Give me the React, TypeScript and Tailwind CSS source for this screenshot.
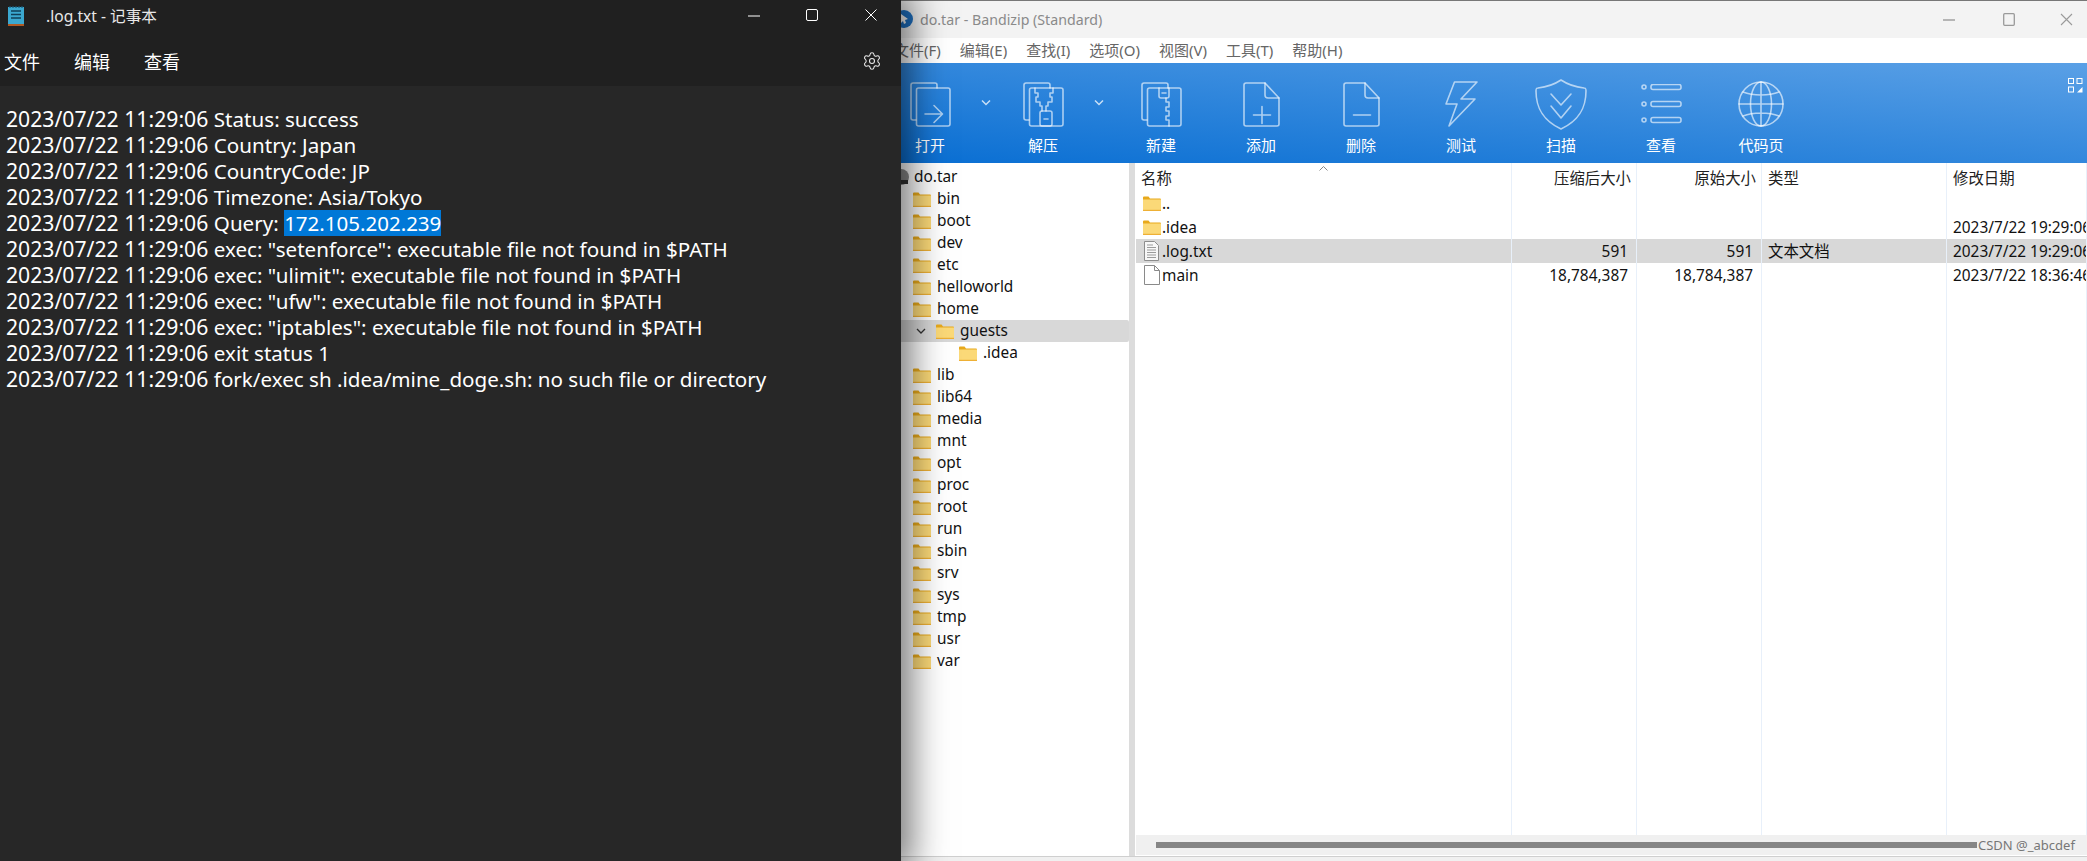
import { Settings } from "lucide-react";

const logLines = [
  "Status: success",
  "Country: Japan",
  "CountryCode: JP",
  "Timezone: Asia/Tokyo",
  "Query: ",
  'exec: "setenforce": executable file not found in $PATH',
  'exec: "ulimit": executable file not found in $PATH',
  'exec: "ufw": executable file not found in $PATH',
  'exec: "iptables": executable file not found in $PATH',
  "exit status 1",
  "fork/exec sh .idea/mine_doge.sh: no such file or directory",
];

const treeFolders = [
  { name: "bin", pl: "pl-[12px]" },
  { name: "boot", pl: "pl-[12px]" },
  { name: "dev", pl: "pl-[12px]" },
  { name: "etc", pl: "pl-[12px]" },
  { name: "helloworld", pl: "pl-[12px]" },
  { name: "home", pl: "pl-[12px]" },
  { name: "guests", pl: "pl-[35px]", selected: true },
  { name: ".idea", pl: "pl-[58px]" },
  { name: "lib", pl: "pl-[12px]" },
  { name: "lib64", pl: "pl-[12px]" },
  { name: "media", pl: "pl-[12px]" },
  { name: "mnt", pl: "pl-[12px]" },
  { name: "opt", pl: "pl-[12px]" },
  { name: "proc", pl: "pl-[12px]" },
  { name: "root", pl: "pl-[12px]" },
  { name: "run", pl: "pl-[12px]" },
  { name: "sbin", pl: "pl-[12px]" },
  { name: "srv", pl: "pl-[12px]" },
  { name: "sys", pl: "pl-[12px]" },
  { name: "tmp", pl: "pl-[12px]" },
  { name: "usr", pl: "pl-[12px]" },
  { name: "var", pl: "pl-[12px]" },
];

function Folder() {
  return (
    <svg width="18" height="15" viewBox="0 0 18 15" className="shrink-0">
      <path d="M0 1.5a1 1 0 0 1 1-1h4.5l1.5 2h10a1 1 0 0 1 1 1V14a1 1 0 0 1-1 1H1a1 1 0 0 1-1-1z" fill="#e8a91c" />
      <path d="M0 3.6h18V14a1 1 0 0 1-1 1H1a1 1 0 0 1-1-1z" fill="#fbd978" />
      <rect x="0" y="13.8" width="18" height="1.2" fill="#eeb035" />
    </svg>
  );
}

function TextFileIcon() {
  return (
    <svg width="15" height="20" viewBox="0 0 15 20" className="shrink-0">
      <path d="M.5.5h10l4 4v15H.5z" fill="#f7f7f7" stroke="#8d8d8d" />
      <path d="M3 4h6M3 6.5h9M3 9h9M3 11.5h9M3 14h9M3 16.5h9" stroke="#9b9b9b" strokeWidth="1" />
    </svg>
  );
}

function BlankFileIcon() {
  return (
    <svg width="16" height="20" viewBox="0 0 16 20" className="shrink-0">
      <path d="M.5.5h10l5 5v14H.5z" fill="#fff" stroke="#8a8a8a" />
      <path d="M10.5.5v5h5" fill="none" stroke="#8a8a8a" />
    </svg>
  );
}

const S = { fill: "none", stroke: "rgba(255,255,255,0.62)", strokeWidth: 1.6, strokeLinejoin: "round" as const, strokeLinecap: "round" as const };

function Pages({ children }: { children?: React.ReactNode }) {
  return (
    <svg width="41" height="45" viewBox="-1 -1 41 45" className="block">
      <path {...S} d="M5 37H2a2 2 0 0 1-2-2V2a2 2 0 0 1 2-2h22a2 2 0 0 1 2 2v3" />
      <rect {...S} x="5.5" y="5" width="33.5" height="38" rx="2" />
      {children}
    </svg>
  );
}

const icons: Record<string, React.ReactNode> = {
  open: (
    <Pages>
      <path {...S} d="M14 31h17M23 22.5l8.5 8.5-8.5 8.5" />
    </Pages>
  ),
  extract: (
    <Pages>
      <path {...S} d="M11 5v5h3v4h-2v5h4v4h2v5M29 5v5h-3v4h2v5h-4v4h-2v5" />
      <rect {...S} x="16" y="28" width="12" height="15" rx="2" />
      <path {...S} d="M20 36h4" />
    </Pages>
  ),
  create: (
    <Pages>
      <path {...S} d="M17 5v8a2 2 0 0 0 2 2h6a2 2 0 0 0 2-2V5M20 10h4" />
      <path {...S} d="M24 15v4h3v5h-3v4h3v5h-3v4h3v6" />
    </Pages>
  ),
  add: (
    <svg width="37" height="45" viewBox="-1 -1 37 45" className="block">
      <path {...S} d="M2 0h19l14 15v26a2 2 0 0 1-2 2H2a2 2 0 0 1-2-2V2a2 2 0 0 1 2-2z" />
      <path {...S} d="M21 0v12a3 3 0 0 0 3 3h11M9.5 32h17M18 23.5v17" />
    </svg>
  ),
  remove: (
    <svg width="37" height="45" viewBox="-1 -1 37 45" className="block">
      <path {...S} d="M2 0h19l14 15v26a2 2 0 0 1-2 2H2a2 2 0 0 1-2-2V2a2 2 0 0 1 2-2z" />
      <path {...S} d="M21 0v12a3 3 0 0 0 3 3h11M9.5 32h17" />
    </svg>
  ),
  test: (
    <svg width="33" height="46" viewBox="-1 -1 33 46" className="block">
      <path {...S} d="M8.5 0H31L15 17h14L3 44l8-22H0z" />
    </svg>
  ),
  scan: (
    <svg width="52" height="51" viewBox="-1 -1 52 51" className="block">
      <path {...S} d="M25 0c6 4 14 7 23 8 2 0 2 1 2 3 0 16-6 29-25 38C6 40 0 27 0 11c0-2 0-3 2-3 9-1 17-4 23-8z" />
      <path {...S} d="M15 14l10 11 10-11M15 26l10 12 10-12" />
    </svg>
  ),
  view: (
    <svg width="41" height="40" viewBox="-1 -1 41 40" className="block">
      {[2, 19, 35].map((y) => (
        <g key={y}>
          <circle {...S} cx="2" cy={y} r="2" />
          <rect {...S} x="9" y={y - 2.5} width="30" height="5" rx="2" />
        </g>
      ))}
    </svg>
  ),
  codepage: (
    <svg width="46" height="46" viewBox="-1 -1 46 46" className="block">
      <circle {...S} cx="22" cy="22" r="22" />
      <ellipse {...S} cx="22" cy="22" rx="10.5" ry="22" />
      <path {...S} d="M22 0v44M0 22h44M4 10c10 4 26 4 36 0M4 34c10-4 26-4 36 0" />
    </svg>
  ),
};

function ToolButton({ icon, label, className }: { icon: string; label: string; className: string }) {
  return (
    <div className={`flex flex-col items-center shrink-0 ${className}`}>
      <div className="h-[46px] flex items-center justify-center">{icons[icon]}</div>
      <div className="mt-[8px] text-[15px] leading-[20px] text-white whitespace-nowrap">{label}</div>
    </div>
  );
}

function Chevron({ className }: { className: string }) {
  return (
    <svg width="12" height="8" viewBox="0 0 12 8" className={`shrink-0 mt-[18px] ${className}`}>
      <path d="M2 1.5l4 4 4-4" fill="none" stroke="rgba(255,255,255,0.75)" strokeWidth="1.5" />
    </svg>
  );
}

const listCols = [
  { head: "名称", width: "w-[376px]", align: "left", cells: ["..", ".idea", ".log.txt", "main"] },
  { head: "压缩后大小", width: "w-[125px]", align: "right", cells: ["", "", "591", "18,784,387"] },
  { head: "原始大小", width: "w-[125px]", align: "right", cells: ["", "", "591", "18,784,387"] },
  { head: "类型", width: "w-[185px]", align: "left", cells: ["", "", "文本文档", ""] },
  { head: "修改日期", width: "flex-1", align: "date", cells: ["", "2023/7/22 19:29:06", "2023/7/22 19:29:06", "2023/7/22 18:36:46"] },
];

function ListColumn({ col, index }: { col: (typeof listCols)[number]; index: number }) {
  const pad =
    col.align === "right" ? "justify-end pr-[8px]" : col.align === "date" ? "pl-[6px]" : index === 0 ? "pl-[5px]" : "pl-[6px]";
  const headPad =
    col.align === "right" ? "justify-end pr-[5px]" : col.align === "date" ? "pl-[6px]" : index === 0 ? "pl-[5px]" : "pl-[6px]";
  return (
    <div className={`${col.width} min-w-0 shrink-0 border-r border-[#e8f0fa] overflow-hidden`}>
      <div className={`h-[28px] pt-[3px] flex items-center whitespace-nowrap relative text-[#222] ${headPad}`}>{col.head}</div>
      {col.cells.map((cell, i) => (
        <div
          key={i}
          className={`h-[24px] flex items-center whitespace-nowrap text-[#111] ${pad} ${i === 2 ? "bg-[#d8d8d8]" : ""}`}
        >
          {index === 0 && (
            <span className="w-[21px] shrink-0 flex justify-center">
              {i < 2 ? <Folder /> : i === 2 ? <TextFileIcon /> : <BlankFileIcon />}
            </span>
          )}
          <span className="pt-[2px]">{cell}</span>
        </div>
      ))}
    </div>
  );
}

export default function App() {
  return (
    <div className="relative flex w-[2087px] h-[861px] overflow-hidden bg-white font-['Noto_Sans','Noto_Sans_CJK_SC',sans-serif]">
      {/* Notepad */}
      <div className="relative z-10 w-[901px] shrink-0 flex flex-col bg-[#272727] text-white shadow-[0_0_34px_10px_rgba(0,0,0,0.55)]">
        <div className="bg-[#202020] h-[86px] shrink-0 flex flex-col">
          <div className="h-[38px] flex items-center relative">
            <svg width="16" height="20" viewBox="0 0 16 20" className="ml-[8px] -mt-[6px] shrink-0">
              <rect x="0" y="1" width="16" height="17" fill="#3ba8d0" />
              <rect x="0" y="18" width="16" height="2" fill="#b05a24" />
              <path d="M3 5h10M3 8.5h10M3 12h10" stroke="#0f3f58" strokeWidth="1.4" />
              <path d="M2 0v2M5 0v2M8 0v2M11 0v2M14 0v2" stroke="#1c5a78" strokeWidth="1.2" />
            </svg>
            <span className="ml-[22px] -mt-[4px] text-[15.6px] text-[#e8e8e8]">.log.txt - 记事本</span>
            <svg width="12" height="12" viewBox="0 0 12 12" className="ml-auto mr-[46px] -mt-[10px] shrink-0">
              <path d="M0 6h12" stroke="#fff" strokeWidth="1" transform="translate(0 2)" />
            </svg>
            <svg width="12" height="12" viewBox="0 0 12 12" className="mr-[47px] -mt-[8px] shrink-0">
              <rect x=".5" y=".5" width="11" height="11" rx="1.5" fill="none" stroke="#fff" />
            </svg>
            <svg width="12" height="12" viewBox="0 0 12 12" className="mr-[24px] -mt-[8px] shrink-0">
              <path d="M.5.5l11 11M11.5.5l-11 11" stroke="#fff" />
            </svg>
          </div>
          <div className="h-[48px] flex items-center pl-[4px] text-[18px] relative">
            <span>文件</span>
            <span className="ml-[34px]">编辑</span>
            <span className="ml-[34px]">查看</span>
            <Settings size={20} strokeWidth={1.3} className="ml-auto mr-[19px] -mt-[2px] text-[#e8e8e8]" />
          </div>
        </div>
        <div className="pt-[20px] pl-[6px] text-[20.6px] leading-[26px] text-white">
          {logLines.map((line, i) => (
            <div key={i} className="h-[26px] whitespace-nowrap">
              <span className="text-[21.2px]">2023/07/22 11:29:06 </span>
              {line}
              {i === 4 && <span className="inline-block h-[26px] bg-[#0078d7] text-[20.5px]">172.105.202.239</span>}
            </div>
          ))}
        </div>
      </div>

      {/* Bandizip */}
      <div className="flex-1 min-w-0 flex flex-col bg-white">
        <div className="h-[38px] shrink-0 bg-[#f3f3f3] border-t border-[#777] flex items-center">
          <svg width="12" height="18" viewBox="0 0 12 18" className="shrink-0 -mt-[1px]">
            <circle cx="3" cy="9" r="9" fill="#1f72c4" />
            <path d="M0 4l7 5-3 1 1 3-2 1-1-3-2 2z" fill="#fff" />
          </svg>
          <span className="ml-[7px] text-[14.2px] text-[#8a8a8a] whitespace-nowrap">do.tar - Bandizip (Standard)</span>
          <svg width="12" height="2" viewBox="0 0 12 2" className="ml-auto mr-[48px] shrink-0">
            <path d="M0 1h12" stroke="#9a9a9a" strokeWidth="1.4" />
          </svg>
          <svg width="12" height="13" viewBox="0 0 12 13" className="mr-[45px] shrink-0">
            <rect x=".7" y=".7" width="10.6" height="11.6" rx="1" fill="none" stroke="#9a9a9a" strokeWidth="1.3" />
          </svg>
          <svg width="13" height="13" viewBox="0 0 13 13" className="mr-[14px] shrink-0">
            <path d="M1 1l11 11M12 1L1 12" stroke="#9a9a9a" strokeWidth="1.1" />
          </svg>
        </div>
        <div className="h-[25px] shrink-0 flex items-center gap-[19px] -ml-[7px] pb-[1px] text-[15px] text-[#666] whitespace-nowrap">
          <span>文件(F)</span>
          <span>编辑(E)</span>
          <span>查找(I)</span>
          <span>选项(O)</span>
          <span>视图(V)</span>
          <span>工具(T)</span>
          <span>帮助(H)</span>
        </div>
        <div className="h-[100px] shrink-0 flex pt-[18px] relative bg-[linear-gradient(to_bottom_left,#5aa0e6,#0a6fd3)]">
          <ToolButton icon="open" label="打开" className="w-[58px]" />
          <Chevron className="ml-[21px]" />
          <ToolButton icon="extract" label="解压" className="w-[100px] ml-px" />
          <Chevron className="" />
          <ToolButton icon="create" label="新建" className="w-[100px] ml-[6px]" />
          <ToolButton icon="add" label="添加" className="w-[100px]" />
          <ToolButton icon="remove" label="删除" className="w-[100px]" />
          <ToolButton icon="test" label="测试" className="w-[100px]" />
          <ToolButton icon="scan" label="扫描" className="w-[100px]" />
          <ToolButton icon="view" label="查看" className="w-[100px]" />
          <ToolButton icon="codepage" label="代码页" className="w-[100px]" />
          <svg width="15" height="15" viewBox="0 0 15 15" className="ml-auto mr-[4px] -mt-[3px] shrink-0">
            <rect x=".5" y=".5" width="5" height="5" fill="none" stroke="#fff" />
            <rect x="9" y=".5" width="5" height="5" fill="none" stroke="#fff" />
            <rect x=".5" y="9" width="5" height="5" fill="none" stroke="#fff" />
            <path d="M9 14.5L14.5 9v5.5z" fill="#fff" />
          </svg>
        </div>

        <div className="flex-1 min-h-0 flex text-[15.4px]">
          {/* Tree */}
          <div className="w-[228px] shrink-0 pt-[3px] text-[#111]">
            <div className="h-[22px] flex items-center pl-[13px]">
              <svg width="8" height="18" viewBox="0 0 8 18" className="-ml-[13px] mr-[5px] shrink-0">
                <circle cx="0" cy="9" r="8" fill="#8b8b8b" />
                <rect x="0" y="12" width="7" height="4" fill="#333" />
              </svg>
              do.tar
            </div>
            {treeFolders.map((f) => (
              <div
                key={f.name}
                className={`h-[22px] flex items-center relative ${f.pl} ${f.selected ? "bg-[#d8d8d8] rounded-r-[2px]" : ""}`}
              >
                {f.selected && (
                  <svg width="10" height="6" viewBox="0 0 10 6" className="-ml-[20px] mr-[10px] shrink-0">
                    <path d="M1 1l4 4 4-4" fill="none" stroke="#333" strokeWidth="1.3" />
                  </svg>
                )}
                <Folder />
                <span className="ml-[6px]">{f.name}</span>
              </div>
            ))}
          </div>
          <div className="w-[6px] shrink-0 bg-[#dcdcdc]" />
          {/* List */}
          <div className="flex-1 min-w-0 flex flex-col relative ml-px">
            <svg width="9" height="5" viewBox="0 0 9 5" className="absolute left-[183px] top-[3px]">
              <path d="M.5 4.5l4-4 4 4" fill="none" stroke="#888" />
            </svg>
            <div className="flex-1 min-h-0 flex">
              {listCols.map((col, i) => (
                <ListColumn key={col.head} col={col} index={i} />
              ))}
            </div>
            <div className="h-[20px] shrink-0 bg-[#f0f0f0] pt-[7px] pl-[20px] pr-[110px]">
              <div className="h-[6px] bg-[#868686]" />
            </div>
            <div className="h-px shrink-0 bg-white" />
          </div>
        </div>
        <div className="h-[5px] shrink-0 bg-[#f0f0f0] border-t border-[#cfcfcf]" />
      </div>

      <div className="absolute left-[1978px] top-[836px] text-[13px] leading-[18px] text-[#777] whitespace-nowrap">CSDN @_abcdef</div>
    </div>
  );
}
